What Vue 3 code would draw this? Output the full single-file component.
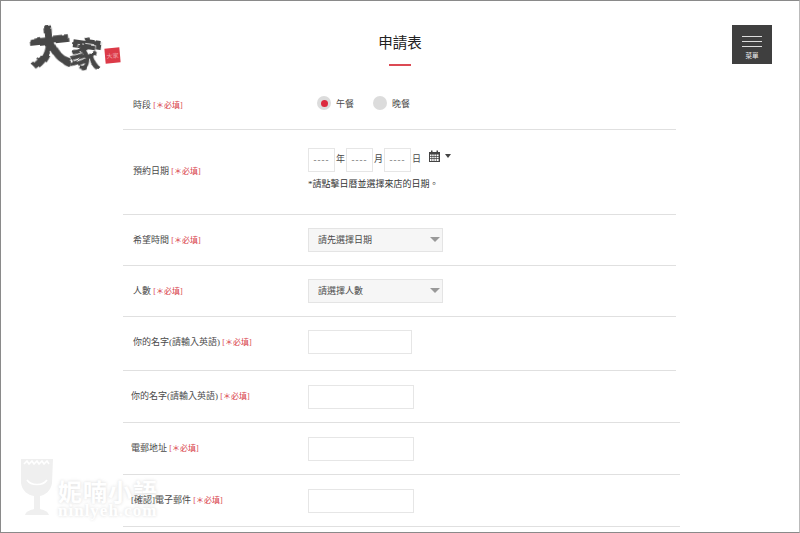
<template>
  <div class="page">
    <!-- 毛筆感的濾鏡 -->
    <svg class="defs" width="0" height="0">
      <filter id="brush" x="-10%" y="-10%" width="120%" height="120%">
        <feTurbulence type="fractalNoise" baseFrequency="0.09" numOctaves="2" seed="4" />
        <feDisplacementMap in="SourceGraphic" scale="5" />
      </filter>
      <filter id="soft"><feGaussianBlur stdDeviation="0.6" /></filter>
    </svg>

    <header class="site-header">
      <div class="logo">
        <span class="logo-big">大</span>
        <span class="logo-small">家</span>
        <span class="seal">大家</span>
      </div>
      <div class="title-block">
        <h1>申請表</h1>
        <div class="title-line"></div>
      </div>
      <button class="menu-btn">
        <span class="bar"></span>
        <span class="bar"></span>
        <span class="bar"></span>
        <span class="menu-text">菜單</span>
      </button>
    </header>

    <!-- 浮水印 -->
    <div class="watermark">
      <svg viewBox="0 0 36 62" width="36" height="62">
        <path fill="#efefef" filter="url(#soft)" d="M2 3h32l-1 24c-1 8-7 12-12 13v13c3 1 8 2 9 6H6c1-4 6-5 9-6V40C9 39 3 35 2 27z" />
        <path fill="none" stroke="#fff" stroke-width="1.6" d="M5 8l3-3 2 3 3-3 2 3 3-3 2 3 3-3 2 3 3-3 2 3M8 24c4 6 16 6 20 0" />
      </svg>
      <div class="wm-text">
        <span class="wm-cn">妮喃小語</span>
        <span class="wm-en">ninlyeh.com</span>
      </div>
    </div>

    <form class="form">
      <!-- 時段 -->
      <div class="row row-time">
        <label class="label">時段 <em>[＊必填]</em></label>
        <div class="radios">
          <span v-for="m in meals" :key="m.name" class="radio-item">
            <span class="radio" :class="{ on: m.on }"></span>{{ m.name }}
          </span>
        </div>
      </div>

      <!-- 日期 -->
      <div class="row row-date">
        <label class="label">預約日期 <em>[＊必填]</em></label>
        <div>
          <div class="date-line">
            <template v-for="d in dateParts" :key="d">
              <span class="date-box">----</span>
              <span class="date-unit">{{ d }}</span>
            </template>
            <svg class="cal" viewBox="0 0 11 12" width="11" height="12">
              <path fill="#444" fill-rule="evenodd" d="M0 2h2V0.5h1.5V2h4V0.5H9V2h2v10H0zM1 4.5v1.5h1.5V4.5zM3.2 4.5v1.5h1.5V4.5zM5.4 4.5v1.5h1.5V4.5zM7.6 4.5v1.5h2V4.5zM1 6.7v1.5h1.5V6.7zM3.2 6.7v1.5h1.5V6.7zM5.4 6.7v1.5h1.5V6.7zM7.6 6.7v1.5h2V6.7zM1 8.9v2h1.5v-2zM3.2 8.9v2h1.5v-2zM5.4 8.9v2h1.5v-2zM7.6 8.9v2h2v-2z" />
            </svg>
            <span class="cal-caret"></span>
          </div>
          <p class="note">*請點擊日曆並選擇來店的日期。</p>
        </div>
      </div>

      <!-- 下拉 -->
      <div v-for="s in selects" :key="s.label" class="row row-select">
        <label class="label">{{ s.label }} <em>[＊必填]</em></label>
        <div class="select">{{ s.text }}<span class="select-caret"></span></div>
      </div>

      <div class="row row-first-input">
        <label class="label">你的名字(請輸入英語) <em>[＊必填]</em></label>
        <input class="text-input short" type="text" />
      </div>

      <div v-for="f in fields" :key="f" class="row row-input">
        <label class="label">{{ f }} <em>[＊必填]</em></label>
        <input class="text-input" type="text" />
      </div>
    </form>
  </div>
</template>

<script setup>
const meals = [
  { name: '午餐', on: true },
  { name: '晚餐', on: false }
]
const dateParts = ['年', '月', '日']
const selects = [
  { label: '希望時間', text: '請先選擇日期' },
  { label: '人數', text: '請選擇人數' }
]
const fields = ['你的名字(請輸入英語)', '電郵地址', '[確認]電子郵件']
</script>

<style>
html, body {
  margin: 0;
  background: #fff;
}
</style>

<style scoped>
.page {
  position: relative;
  box-sizing: border-box;
  width: 800px;
  height: 533px;
  overflow: hidden;
  border: 1px solid #8a8a8a;
  border-right-color: #bbb;
  background: #fff;
  color: #4a4a4a;
  font-family: "Liberation Serif", "Noto Sans CJK TC", serif;
  font-size: 9px;
}

.defs {
  position: absolute;
}

.site-header {
  display: grid;
  grid-template-columns: 1fr auto 1fr;
  height: 79px;
  padding: 24px 27px 0;
  box-sizing: border-box;
}

.logo {
  display: flex;
  align-items: flex-start;
  color: #464646;
  font-family: "Noto Sans CJK TC", sans-serif;
  font-weight: 900;
  line-height: 1;
}

.logo-big {
  font-size: 44px;
  margin-top: -2px;
  letter-spacing: -3px;
  transform: rotate(-6deg);
  filter: url(#brush);
}

.logo-small {
  font-size: 33px;
  margin-top: 11px;
  transform: rotate(8deg);
  filter: url(#brush);
}

.seal {
  width: 15px;
  height: 15px;
  margin: 23px 0 0 3px;
  background: #dc3a48;
  color: #f2a9b0;
  font-size: 6px;
  font-weight: 400;
  line-height: 15px;
  text-align: center;
  overflow: hidden;
  transform: rotate(-5deg);
  white-space: nowrap;
}

.title-block {
  text-align: center;
  padding-top: 9px;
}

h1 {
  margin: 0;
  color: #222;
  font-size: 14.5px;
  font-weight: 400;
  line-height: 18px;
}

.title-line {
  width: 22px;
  height: 2px;
  margin: 12px auto 0;
  background: #dc4a54;
}

.menu-btn {
  justify-self: end;
  display: flex;
  flex-direction: column;
  align-items: center;
  width: 40px;
  height: 39px;
  padding: 11px 0 0;
  border: 0;
  background: #3f3f3f;
  color: #eee;
  font-family: inherit;
}

.bar {
  width: 20px;
  height: 1px;
  margin-bottom: 4px;
  background: #ddd;
}

.menu-text {
  font-size: 6.5px;
  line-height: 9px;
}

.form {
  position: relative;
  width: 553px;
  margin-left: 122px;
}

.row {
  display: grid;
  grid-template-columns: 175px 1fr;
  align-items: center;
  padding-left: 10px;
  border-bottom: 1px solid #e0e0e0;
}

.label {
  line-height: 12px;
}

em {
  color: #d8404a;
  font-style: normal;
  font-size: 8px;
}

.row-time {
  height: 50px;
  box-sizing: border-box;
}

.row-time .label {
  padding-top: 2px;
}

.radios {
  display: flex;
  gap: 19px;
  padding: 0 0 3px 9px;
}

.radio-item {
  display: flex;
  align-items: center;
  gap: 5px;
}

.radio {
  display: flex;
  width: 14px;
  height: 14px;
  border-radius: 50%;
  background: #dcdcdc;
  align-items: center;
  justify-content: center;
}

.radio.on::after {
  content: "";
  width: 7px;
  height: 7px;
  border-radius: 50%;
  background: #dc2a3e;
}

.row-date {
  height: 85px;
  box-sizing: border-box;
  align-items: start;
  padding-top: 18px;
}

.row-date .label {
  padding-top: 17px;
}

.date-line {
  display: flex;
  align-items: flex-start;
}

.date-box {
  box-sizing: border-box;
  width: 27px;
  height: 24px;
  border: 1px solid #e6e6e6;
  color: #666;
  letter-spacing: 1px;
  line-height: 22px;
  text-align: center;
}

.date-unit {
  width: 11px;
  line-height: 22px;
  text-align: center;
}

.cal {
  margin: 2px 0 0 7px;
}

.cal-caret {
  width: 0;
  height: 0;
  margin: 6px 0 0 5px;
  border: 3.5px solid transparent;
  border-top: 4px solid #444;
  border-bottom: 0;
}

.note {
  margin: 6px 0 0;
  line-height: 12px;
  color: #333;
}

.row-select {
  box-sizing: border-box;
  height: 51px;
}

.select {
  position: relative;
  box-sizing: border-box;
  width: 135px;
  height: 24px;
  padding-left: 9px;
  border: 1px solid #e4e4e4;
  background: #f6f6f6;
  line-height: 23px;
}

.select-caret {
  position: absolute;
  right: 2px;
  top: 8px;
  border: 5px solid transparent;
  border-top: 5px solid #999;
  border-bottom: 0;
}

.text-input {
  box-sizing: border-box;
  width: 106px;
  height: 24px;
  padding: 0;
  border: 1px solid #e6e6e6;
  background: #fff;
  outline: none;
}

.text-input.short {
  width: 104px;
}

.row-first-input {
  box-sizing: border-box;
  height: 54px;
  padding-bottom: 3px;
}

.row-input {
  box-sizing: border-box;
  width: 557px;
  height: 52px;
  padding-left: 8px;
  grid-template-columns: 177px 1fr;
}

.watermark {
  position: absolute;
  left: 18px;
  top: 455px;
  display: flex;
  align-items: flex-start;
  gap: 3px;
  pointer-events: none;
}

.wm-text {
  display: flex;
  flex-direction: column;
  padding-top: 22px;
  color: #fff;
  font-family: "Noto Sans CJK TC", sans-serif;
  font-weight: 700;
  text-shadow: 0 0 3px #e2e2e2, 0 0 5px #eee;
  line-height: 1;
}

.wm-cn {
  font-size: 24px;
  letter-spacing: 1px;
  line-height: 26px;
}

.wm-en {
  font-family: "Liberation Serif", serif;
  font-size: 17px;
  letter-spacing: 1px;
  line-height: 14px;
}
</style>
